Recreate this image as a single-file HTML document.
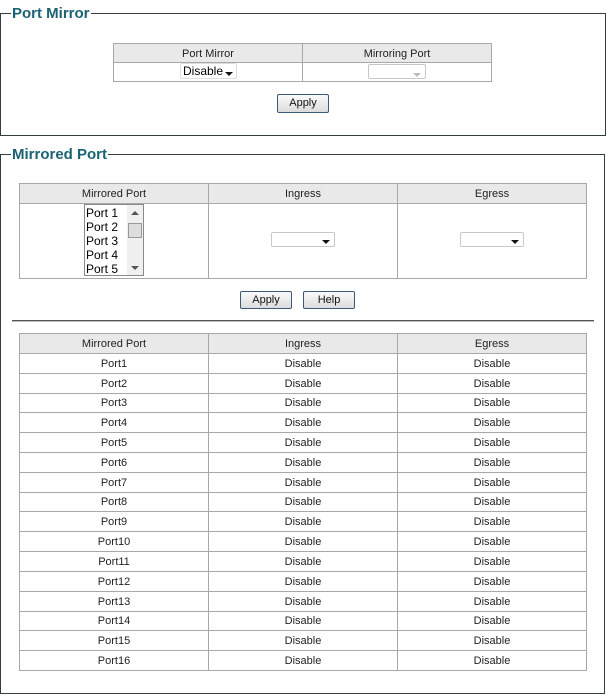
<!DOCTYPE html>
<html><head><style>
*{box-sizing:border-box;margin:0;padding:0}
body{width:606px;height:695px;background:#fff;position:relative;font-family:Tahoma,"Liberation Sans",sans-serif;font-size:11px;color:#222;overflow:hidden}
.box{position:absolute;border:1px solid #333c40;border-left-width:1px}
.title{position:absolute;background:#fff;color:#1b6272;font-weight:bold;font-size:15px;padding:0 1px;line-height:17px}
.cell{position:absolute;border:1px solid #a8a8a8;text-align:center;padding-top:1px}
.hd{background:#e9e9e9}
.btn{position:absolute;border:1px solid #3c5a78;border-radius:2px;background:linear-gradient(#fafafa,#dcdcdc);text-align:center;font-size:11px;line-height:17px;color:#111}
.sel{position:absolute;border:1px solid #c8c8c8;border-radius:2px;background:#fff}
.arr{position:absolute;width:0;height:0;border-left:4px solid transparent;border-right:4px solid transparent;border-top:4px solid #111}
</style></head><body>
<div class="box" style="left:0;top:13px;width:606px;height:123px"></div>
<div class="title" style="left:11px;top:5px">Port Mirror</div>

<div class="cell hd" style="left:113px;top:43px;width:190px;height:20px;line-height:18px">Port Mirror</div>
<div class="cell hd" style="left:302px;top:43px;width:190px;height:20px;line-height:18px">Mirroring Port</div>
<div class="cell" style="left:113px;top:62px;width:190px;height:20px"></div>
<div class="cell" style="left:302px;top:62px;width:190px;height:20px"></div>
<div class="sel" style="left:180px;top:63px;width:57px;height:16px;border-color:#ddd;font-size:12px;line-height:15px;text-align:left;padding-left:2px;color:#000">Disable</div>
<div class="arr" style="left:225px;top:72px"></div>
<div class="sel" style="left:368px;top:64px;width:58px;height:15px"></div>
<div class="arr" style="left:413px;top:73px;border-top-color:#bbb"></div>
<div class="btn" style="left:277px;top:94px;width:52px;height:19px">Apply</div>

<div class="box" style="left:0;top:154px;width:605px;height:540px"></div>
<div class="title" style="left:11px;top:146px">Mirrored Port</div>

<div class="cell hd" style="left:19px;top:183px;width:190px;height:21px;line-height:18px">Mirrored Port</div>
<div class="cell hd" style="left:208px;top:183px;width:190px;height:21px;line-height:18px">Ingress</div>
<div class="cell hd" style="left:397px;top:183px;width:190px;height:21px;line-height:18px">Egress</div>
<div class="cell" style="left:19px;top:203px;width:190px;height:76px"></div>
<div class="cell" style="left:208px;top:203px;width:190px;height:76px"></div>
<div class="cell" style="left:397px;top:203px;width:190px;height:76px"></div>
<div style="position:absolute;left:84px;top:204px;width:60px;height:72px;border:1px solid #8a8a8a;background:#fff;font-size:12px;line-height:14px;padding:1px 0 0 1px;color:#000;text-align:left">Port 1<br>Port 2<br>Port 3<br>Port 4<br>Port 5</div>
<div style="position:absolute;left:127px;top:205px;width:16px;height:70px;background:#f0f0f0"></div>
<div style="position:absolute;left:128px;top:223px;width:14px;height:15px;border:1px solid #999;background:#ddd"></div>
<div class="arr" style="left:131px;top:211px;border-top:none;border-bottom:4px solid #555"></div>
<div class="arr" style="left:131px;top:266px;border-top-color:#555"></div>
<div class="sel" style="left:271px;top:232px;width:64px;height:15px"></div>
<div class="arr" style="left:322px;top:240px"></div>
<div class="sel" style="left:460px;top:232px;width:64px;height:15px"></div>
<div class="arr" style="left:511px;top:240px"></div>
<div class="btn" style="left:240px;top:291px;width:52px;height:18px">Apply</div>
<div class="btn" style="left:303px;top:291px;width:52px;height:18px">Help</div>
<div style="position:absolute;left:12px;top:320px;width:582px;height:2px;background:#555;border-bottom:1px solid #bbb"></div>

<div id="t"></div>
<script>
var h='';
function row(top,hgt,a,b,c,hd){
 var cls='cell'+(hd?' hd':'');
 [[19,a],[208,b],[397,c]].forEach(function(p){
  h+='<div class="'+cls+'" style="left:'+p[0]+'px;top:'+top+'px;width:190px;height:'+(hgt+1)+'px;line-height:'+(hgt-2)+'px">'+p[1]+'</div>';
 });
}
row(333,20,'Mirrored Port','Ingress','Egress',1);
for(var i=0;i<16;i++){
 var t=Math.round(353+i*19.81),n=Math.round(353+(i+1)*19.81);
 row(t,n-t,'Port'+(i+1),'Disable','Disable',0);
}
document.getElementById('t').innerHTML=h;
</script>
</body></html>
